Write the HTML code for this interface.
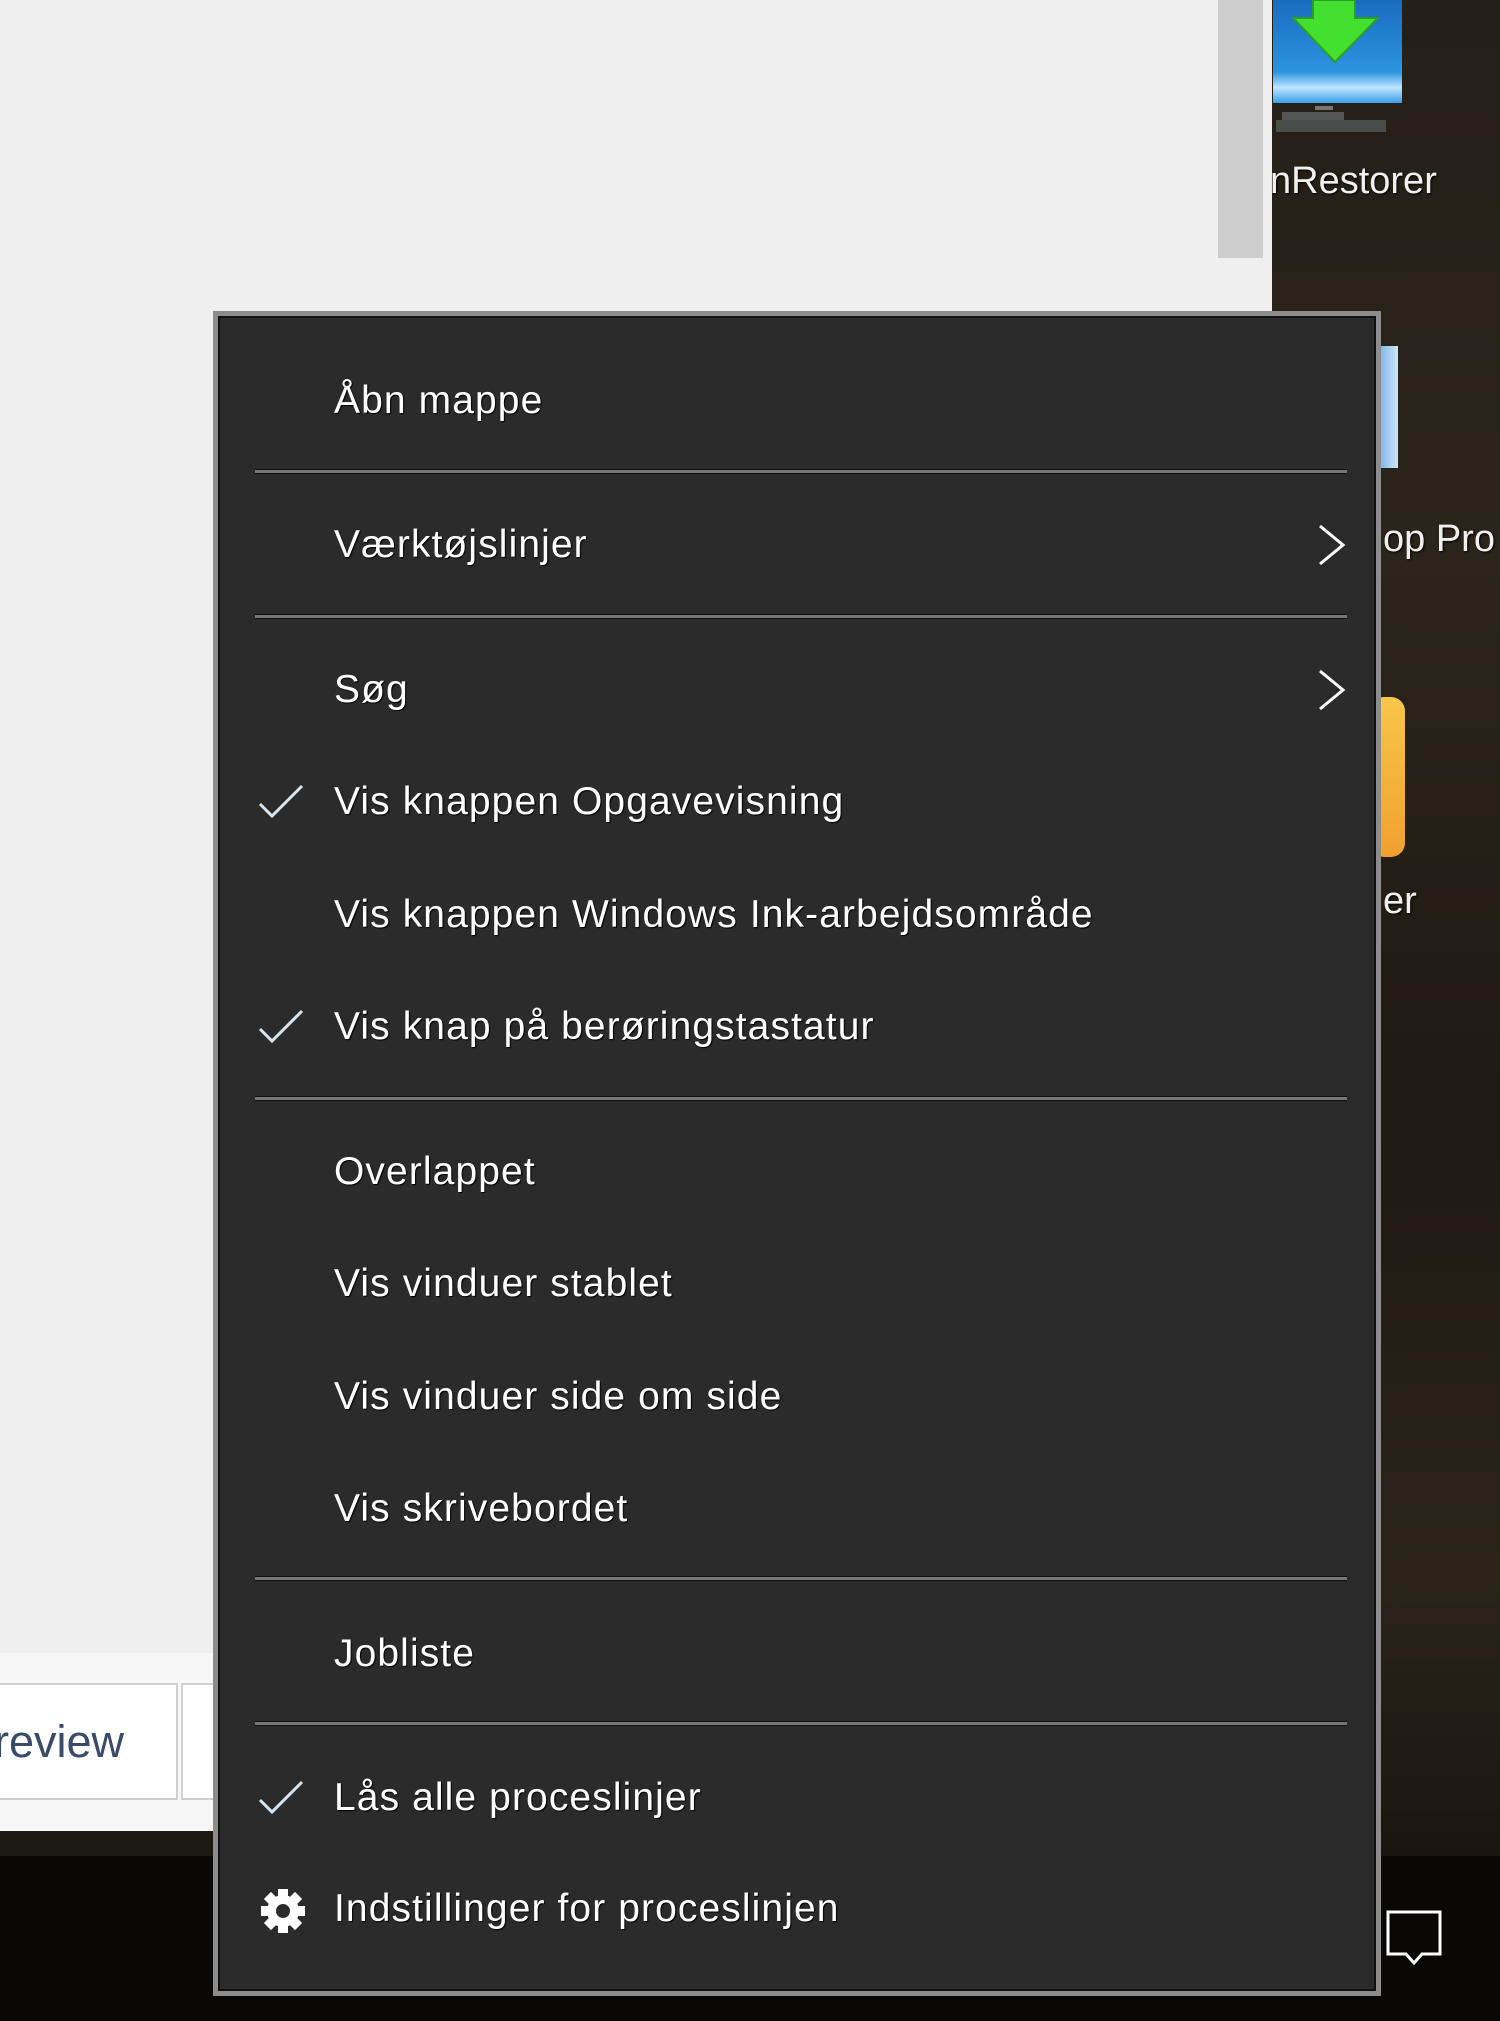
<!DOCTYPE html>
<html><head><meta charset="utf-8">
<style>
html,body{margin:0;padding:0;width:1500px;height:2021px;overflow:hidden;background:#1c1812;font-family:"Liberation Sans","DejaVu Sans",sans-serif;}
.abs{position:absolute;}
#desk{left:1272px;top:0;width:228px;height:1858px;background:linear-gradient(180deg,#241f17 0%,#2b251b 30%,#1f1a12 60%,#2a2419 85%,#1a160f 100%);}
#task{left:0;top:1856px;width:1500px;height:165px;background:#0a0807;}
#win{left:0;top:0;width:1272px;height:1653px;background:#efefef;}
#scroll{left:1218px;top:0;width:45px;height:258px;background:#cdcdcd;}
#strip{left:0;top:1653px;width:1272px;height:178px;background:#f7f7f7;}
.tab{background:#fff;border:2px solid #cfcfcf;}
.dt{color:#f0f0f0;font-size:38px;text-shadow:1px 1px 2px #000;white-space:nowrap;}
#menu{left:213px;top:311px;width:1158px;height:1675px;background:#2b2b2b;border:5px solid #8c8c8c;box-shadow:inset 0 0 0 2px #111;}
.it{position:absolute;left:116px;color:#fff;font-size:39px;letter-spacing:1.1px;white-space:nowrap;line-height:44px;text-shadow:1px 1px 1px #000;}
.sep{position:absolute;left:37px;width:1092px;height:3px;background:#777;box-shadow:0 -1px 0 #111,0 1px 0 #111;}
.chk{position:absolute;left:38px;}
.chev{position:absolute;left:1097px;}
</style></head><body>
<div class="abs" id="desk"></div>
<div class="abs" id="task"></div>
<div class="abs" id="win"></div>
<div class="abs" id="scroll"></div>
<div class="abs" id="strip"></div>
<div class="abs tab" style="left:-2px;top:1683px;width:176px;height:113px;"></div>
<div class="abs tab" style="left:181px;top:1683px;width:40px;height:113px;"></div>
<div class="abs" style="left:-6px;top:1716px;font-size:45px;color:#3a4a68;">review</div>

<div class="abs" style="left:1273px;top:0;width:129px;height:103px;background:linear-gradient(180deg,#1a6bc0,#2a95e0 70%,#bfe4ff 85%,#3aa0e8);"></div>
<svg class="abs" style="left:1273px;top:0" width="129" height="110"><polygon points="40,0 82,0 82,18 105,18 62,62 20,18 40,18" fill="#44e030" stroke="#2aa020" stroke-width="2"/><rect x="42" y="106" width="18" height="14" fill="#777"/></svg>
<div class="abs" style="left:1282px;top:112px;width:62px;height:8px;background:#555;"></div>
<div class="abs" style="left:1276px;top:120px;width:110px;height:12px;background:#4a4d4c;"></div>
<div class="abs dt" style="left:1270px;top:160px;">nRestorer</div>
<div class="abs" style="left:1380px;top:346px;width:18px;height:122px;background:linear-gradient(90deg,#7fb6e8,#cfe6f7);"></div>
<div class="abs dt" style="left:1383px;top:518px;">op Pro</div>
<div class="abs" style="left:1370px;top:697px;width:35px;height:160px;background:linear-gradient(180deg,#f7c64a,#f0a030);border-radius:14px;"></div>
<div class="abs dt" style="left:1383px;top:880px;">er</div>
<svg class="abs" style="left:1384px;top:1908px" width="62" height="62"><path d="M4 4 H56 V46 H38 L30 55 L22 46 H4 Z" fill="none" stroke="#fff" stroke-width="3"/></svg>

<div class="abs" id="menu">
<div class="it" style="top:63px">Åbn mappe</div>
<div class="sep" style="top:154px"></div>
<div class="it" style="top:207px">Værktøjslinjer</div>
<svg class="chev" style="top:207px" width="34" height="44"><path d="M5 3 L28 22 L5 41" fill="none" stroke="#fff" stroke-width="3"/></svg>
<div class="sep" style="top:299px"></div>
<div class="it" style="top:352px">Søg</div>
<svg class="chev" style="top:352px" width="34" height="44"><path d="M5 3 L28 22 L5 41" fill="none" stroke="#fff" stroke-width="3"/></svg>
<svg class="chk" style="top:464px" width="54" height="44"><path d="M4 24 L16 36 L46 6" fill="none" stroke="#d8e4ee" stroke-width="3"/></svg>
<div class="it" style="top:464px">Vis knappen Opgavevisning</div>
<div class="it" style="top:577px">Vis knappen Windows Ink-arbejdsområde</div>
<svg class="chk" style="top:689px" width="54" height="44"><path d="M4 24 L16 36 L46 6" fill="none" stroke="#d8e4ee" stroke-width="3"/></svg>
<div class="it" style="top:689px">Vis knap på berøringstastatur</div>
<div class="sep" style="top:781px"></div>
<div class="it" style="top:834px">Overlappet</div>
<div class="it" style="top:946px">Vis vinduer stablet</div>
<div class="it" style="top:1059px">Vis vinduer side om side</div>
<div class="it" style="top:1171px">Vis skrivebordet</div>
<div class="sep" style="top:1261px"></div>
<div class="it" style="top:1316px">Jobliste</div>
<div class="sep" style="top:1406px"></div>
<svg class="chk" style="top:1460px" width="54" height="44"><path d="M4 24 L16 36 L46 6" fill="none" stroke="#d8e4ee" stroke-width="3"/></svg>
<div class="it" style="top:1460px">Lås alle proceslinjer</div>
<svg class="abs" style="left:40px;top:1570px" width="50" height="50" viewBox="-25 -25 50 50">
<g fill="#fff"><circle r="16"/>
<rect x="-5" y="-22" width="10" height="44"/>
<rect x="-5" y="-22" width="10" height="44" transform="rotate(45)"/>
<rect x="-5" y="-22" width="10" height="44" transform="rotate(90)"/>
<rect x="-5" y="-22" width="10" height="44" transform="rotate(135)"/></g>
<circle r="7" fill="#2b2b2b"/></svg>
<div class="it" style="top:1571px">Indstillinger for proceslinjen</div>
</div>
</body></html>
